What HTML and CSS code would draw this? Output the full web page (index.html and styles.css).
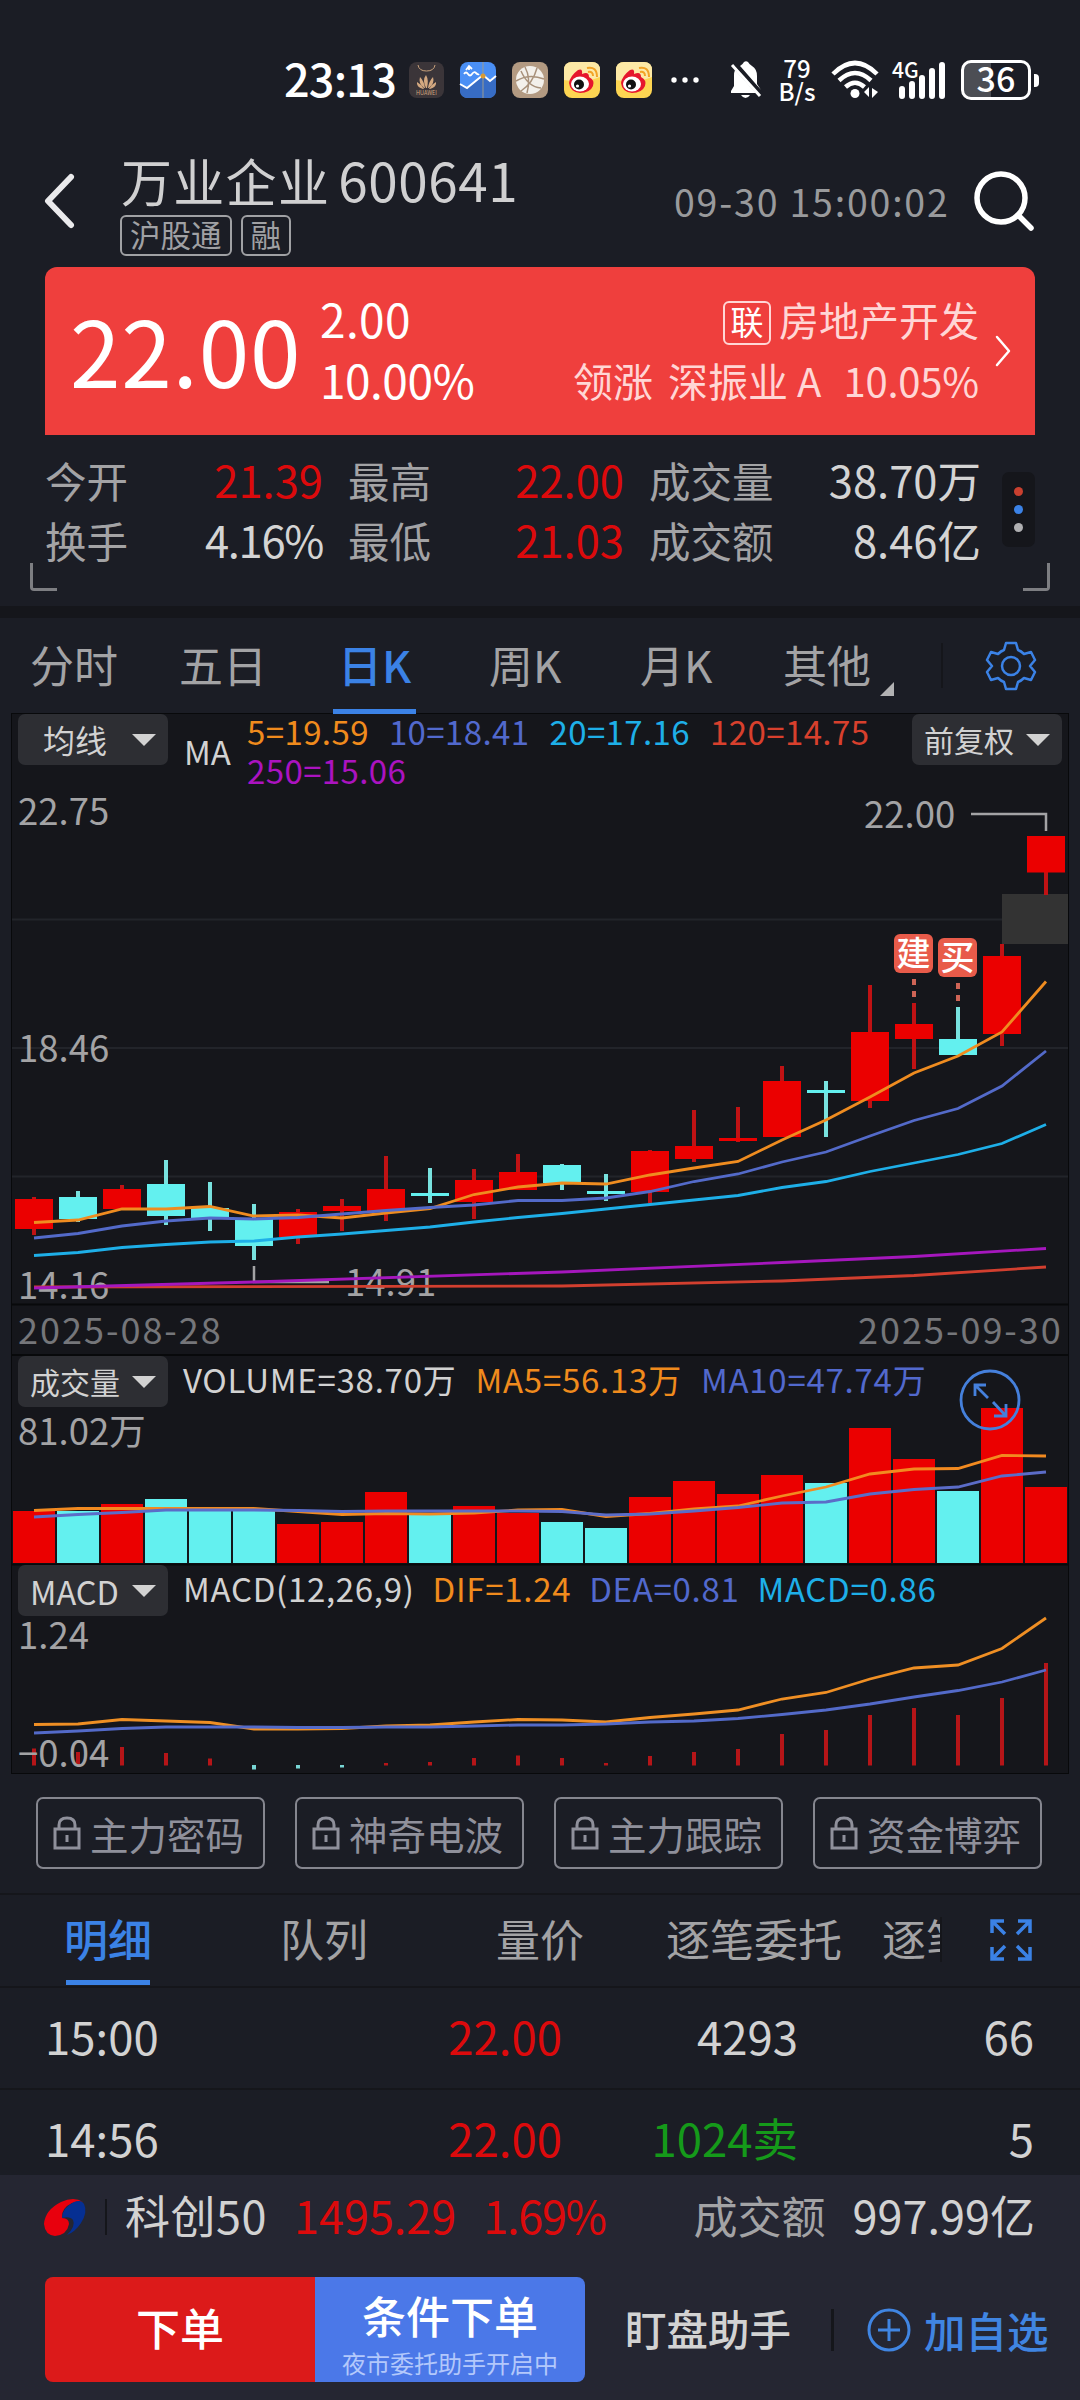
FILE: index.html
```html
<!DOCTYPE html>
<html lang="zh-CN">
<head>
  <meta charset="UTF-8" />
  <meta name="viewport" content="width=device-width, initial-scale=1.0"/>
  <title>万业企业 600641</title>
  <link rel="stylesheet" href="styles.css">
</head>
<body>

  <!-- Status bar -->
  <div class="status">
    <span class="clock">23:13</span>
    <div class="apps">
      <svg width="35" height="36" viewBox="0 0 35 36">
        <rect width="35" height="36" rx="8" fill="#3b3539"/>
        <path d="M9 3Q10 9 17.500 9T26 3" fill="none" stroke="#c9a27c" stroke-width="1"/>
        <path d="M17 26Q13 18 17 13Q20 18 18 26ZM15 26Q9 21 11 15Q15 19 16 26ZM20 26Q26 21 24 15Q20 19 19 26ZM14 27Q7 25 8 20Q12 22 15 27ZM21 27Q28 25 27 20Q23 22 20 27Z" fill="#d3a880"/>
        <text x="17.500" y="33" class="tiny-brand">HUAWEI</text>
      </svg>
      <svg width="36" height="36" viewBox="0 0 36 36">
        <rect width="36" height="36" rx="8" fill="#4a8ff5"/>
        <path d="M0 22L7 26L23 13L30 19L36 14V28Q36 36 28 36H8Q0 36 0 28Z" fill="#376cc4"/>
        <path d="M0 22L7 26L23 13L30 19L36 14" fill="none" stroke="#fff" stroke-width="2"/>
        <path d="M23 0V36" stroke="#9a9a90" stroke-width="1"/>
        <path d="M4 12Q6 9 8 12T12 12T16 11T19 12M6 8L9 4L12 7M9 4V8" fill="none" stroke="#fff" stroke-width="1.800"/>
        <circle cx="23" cy="14" r="2.500" fill="#d99b35"/>
      </svg>
      <svg width="36" height="36" viewBox="0 0 36 36">
        <rect width="36" height="36" rx="8" fill="#b39a82"/>
        <circle cx="18" cy="18" r="14" fill="#f3f0eb"/>
        <path d="M13 5Q19 16 15 31M4 19Q17 11 32 17M25 6Q21 21 9 29M9 9Q16 25 29 26" fill="none" stroke="#a8917b" stroke-width="1.500"/>
      </svg>
      <svg width="36" height="36" viewBox="0 0 36 36">
        <rect width="36" height="36" rx="8" fill="#fdd552"/>
        <path d="M0 8Q0 0 8 0H28Q36 0 36 8V15Q18 22 0 18Z" fill="#fde9a6"/>
        <path d="M5 21Q6 14 14 8Q19 6 18 12Q25 9 25 15Q31 18 29 24Q26 31 16 31Q6 30 5 21Z" fill="#e6162d"/>
        <ellipse cx="16" cy="22" rx="9" ry="7.500" fill="#fff"/>
        <circle cx="15" cy="22.500" r="5" fill="#111"/>
        <circle cx="13.500" cy="24" r="1.600" fill="#fff"/>
        <path d="M23 6Q33 4 33 15M24 10Q29 9 29 14" fill="none" stroke="#f2a325" stroke-width="2"/>
      </svg>
      <svg width="36" height="36" viewBox="0 0 36 36">
        <rect width="36" height="36" rx="8" fill="#fdd552"/>
        <path d="M0 8Q0 0 8 0H28Q36 0 36 8V15Q18 22 0 18Z" fill="#fde9a6"/>
        <path d="M5 21Q6 14 14 8Q19 6 18 12Q25 9 25 15Q31 18 29 24Q26 31 16 31Q6 30 5 21Z" fill="#e6162d"/>
        <ellipse cx="16" cy="22" rx="9" ry="7.500" fill="#fff"/>
        <circle cx="15" cy="22.500" r="5" fill="#111"/>
        <circle cx="13.500" cy="24" r="1.600" fill="#fff"/>
        <path d="M23 6Q33 4 33 15M24 10Q29 9 29 14" fill="none" stroke="#f2a325" stroke-width="2"/>
      </svg>
    </div>
    <svg class="more" width="28" height="8" viewBox="0 0 28 8" fill="#fff">
      <circle cx="3" cy="4" r="2.700"/><circle cx="14" cy="4" r="2.700"/><circle cx="25" cy="4" r="2.700"/>
    </svg>
    <svg class="bell" width="34" height="38" viewBox="0 0 34 38" fill="#fff">
      <path d="M11 5Q14 3 15 1Q17 -.5 19 1Q20 3 23 5Q28 8 28 15V23L32 29L12 6Z"/>
      <path d="M6 9L27 32H2V30L5 25V15Q5 11 6 9Z"/>
      <path d="M3 4L31 35" stroke="#fff" stroke-width="3"/>
      <path d="M7 4L33 32" stroke="#1b1d25" stroke-width="2"/>
      <path d="M12 34H21Q19 37 16.500 37T12 34Z"/>
    </svg>
    <div class="speed"><span>79</span><span>B/s</span></div>
    <svg class="wifi" width="48" height="38" viewBox="0 0 48 38">
      <path d="M2 13Q24 -9 46 13" fill="none" stroke="#fff" stroke-width="4.500"/>
      <path d="M8 19.500Q24 4.500 40 19.500" fill="none" stroke="#fff" stroke-width="4.500"/>
      <path d="M14.500 26Q24 17.500 33.500 26" fill="none" stroke="#fff" stroke-width="4.500"/>
      <circle cx="24" cy="32.500" r="4.500" fill="#fff"/>
      <path d="M38 26V36L33 31ZM41 27L47 31L41 37Z" fill="#fff"/>
    </svg>
    <svg class="signal" width="56" height="38" viewBox="0 0 56 38">
      <text x="0" y="17" class="net">4G</text>
      <path d="M10 28V35M20 23V35M30 17V35M40 10V35M50 4V35" stroke="#fff" stroke-width="6" stroke-linecap="round"/>
    </svg>
    <div class="battery"><span>36</span></div>
    <i class="battery-tip"></i>
  </div>

  <!-- Title -->
  <header>
    <svg class="back" width="32" height="56" viewBox="0 0 32 56">
      <path d="M27 4L4 28L27 52" fill="none" stroke="#eaeaec" stroke-width="6" stroke-linecap="round" stroke-linejoin="round"/>
    </svg>
    <div class="name">
      <h1>万业企业<span>600641</span></h1>
      <div class="tags"><span>沪股通</span><span>融</span></div>
    </div>
    <span class="time">09-30 15:00:02</span>
    <svg class="search" width="62" height="64" viewBox="0 0 62 64">
      <circle cx="28" cy="29" r="24" fill="none" stroke="#fff" stroke-width="5.500"/>
      <path d="M45 46L58 59" stroke="#fff" stroke-width="5.500" stroke-linecap="round"/>
    </svg>
  </header>

  <!-- Price banner -->
  <section class="banner">
    <strong>22.00</strong>
    <div class="change"><span>2.00</span><span class="pct">10.00%</span></div>
    <div class="sector">
      <div><b>联</b>房地产开发</div>
      <div class="leader"><span>领涨</span><span>深振业<em>A</em></span><span>10.05%</span></div>
    </div>
    <svg width="18" height="34" viewBox="0 0 18 34">
      <path d="M3 3L15 17L3 31" fill="none" stroke="#fff" stroke-width="2.500" stroke-linecap="round" stroke-linejoin="round"/>
    </svg>
  </section>

  <section class="quote">
    <div class="stats">
      <p><span>今开</span><b class="up">21.39</b></p>
      <p><span>最高</span><b class="up">22.00</b></p>
      <p><span>成交量</span><b>38.70万</b></p>
      <p><span>换手</span><b class="pct">4.16%</b></p>
      <p><span>最低</span><b class="up">21.03</b></p>
      <p><span>成交额</span><b>8.46亿</b></p>
    </div>
    <div class="dots"><i class="red"></i><i class="blue"></i><i class="gray"></i></div>
    <i class="corner left"></i>
    <i class="corner right"></i>
  </section>

  <!-- Period tabs -->
  <nav class="periods">
    <a>分时</a>
    <a>五日</a>
    <a class="active">日K</a>
    <a>周K</a>
    <a>月K</a>
    <a class="other">其他</a>
    <i class="split"></i>
    <svg width="50" height="50" viewBox="0 0 50 50" fill="none" stroke="#3b82e6" stroke-width="2.500" stroke-linejoin="round">
      <path d="M20 2H30L32 9Q35 10 38 13L45 11L49 19L44 25L49 31L45 39L38 37Q35 40 32 41L30 48H20L18 41Q15 40 12 37L5 39L1 31L6 25L1 19L5 11L12 13Q15 10 18 9Z"/>
      <circle cx="25" cy="25" r="9"/>
    </svg>
  </nav>

  <!-- Charts -->
  <section class="charts">
    <div class="legend main">
      <button class="wide">均线<i></i></button>
      <span class="ma">MA</span>
      <p><span class="c5">5=19.59</span><span class="c10">10=18.41</span><span class="c20">20=17.16</span><span class="c120">120=14.75</span><span class="c250">250=15.06</span></p>
      <button>前复权<i></i></button>
    </div>
    <svg id="price" width="1056" height="566" viewBox="12 790 1056 566"></svg>

    <div class="legend volume">
      <button>成交量<i></i></button>
      <span>VOLUME=38.70万</span><span class="c5">MA5=56.13万</span><span class="c10">MA10=47.74万</span>
      <svg class="expand" width="62" height="62" viewBox="0 0 62 62" fill="none" stroke="#4580dc" stroke-width="2.800">
        <circle cx="31" cy="31" r="29"/>
        <path d="M16 27V16H27M16 16L29 29M34 33L46 46M35 47H47V35"/>
      </svg>
    </div>
    <svg id="volume" width="1056" height="158" viewBox="12 1407 1056 158"></svg>

    <div class="legend macd">
      <button>MACD<i></i></button>
      <span>MACD(12,26,9)</span><span class="c5">DIF=1.24</span><span class="c10">DEA=0.81</span><span class="c20">MACD=0.86</span>
    </div>
    <svg id="macd" width="1056" height="157" viewBox="12 1616 1056 157"></svg>
  </section>

  <div class="locks">
    <a><svg width="28" height="34" viewBox="0 0 28 34"><path d="M6 13V9Q6 2 14 2T22 9V13M2 13H26V32H2ZM14 19V26"/></svg>主力密码</a>
    <a><svg width="28" height="34" viewBox="0 0 28 34"><path d="M6 13V9Q6 2 14 2T22 9V13M2 13H26V32H2ZM14 19V26"/></svg>神奇电波</a>
    <a><svg width="28" height="34" viewBox="0 0 28 34"><path d="M6 13V9Q6 2 14 2T22 9V13M2 13H26V32H2ZM14 19V26"/></svg>主力跟踪</a>
    <a><svg width="28" height="34" viewBox="0 0 28 34"><path d="M6 13V9Q6 2 14 2T22 9V13M2 13H26V32H2ZM14 19V26"/></svg>资金博弈</a>
  </div>

  <!-- Trade details -->
  <nav class="detail-tabs">
    <a class="active">明细</a>
    <a>队列</a>
    <a>量价</a>
    <a>逐笔委托</a>
    <a class="cut">逐笔</a>
    <i class="split"></i>
    <svg width="44" height="44" viewBox="0 0 44 44" fill="none" stroke="#3b82e6" stroke-width="3.500">
      <path d="M3 15V3H15M3 3L16 16M29 3H41V15M41 3L28 16M3 29V41H15M3 41L16 28M29 41H41V29M41 41L28 28"/>
    </svg>
  </nav>
  <div class="trade"><span>15:00</span><span class="up">22.00</span><span>4293</span><span>66</span></div>
  <div class="trade"><span>14:56</span><span class="up">22.00</span><span class="down">1024卖</span><span>5</span></div>

  <!-- Bottom bar -->
  <footer>
    <div class="index">
      <svg width="42" height="38" viewBox="0 0 42 38">
        <path d="M39 4Q30 -2 17 4Q1 12 0 26Q1 37 11 38Q23 37 25 26Q25 20 18 20Q17 10 28 5Q35 2 39 4Z" fill="#e8000d"/>
        <path d="M30 4Q37 1 40 6Q44 14 37 25Q31 34 23 37Q32 28 29 22Q26 18 18 20Q18 10 30 4Z" fill="#062f92"/>
      </svg>
      <i class="split"></i>
      <span class="label">科创50</span>
      <span class="up">1495.29</span>
      <span class="up pct">1.69%</span>
      <span class="amount">成交额</span>
      <span>997.99亿</span>
    </div>
    <div class="actions">
      <button class="order">下单</button>
      <button class="cond">条件下单<small>夜市委托助手开启中</small></button>
      <a class="helper">盯盘助手</a>
      <i class="split"></i>
      <a class="add">
        <svg width="44" height="44" viewBox="0 0 44 44" fill="none" stroke="#4085e2" stroke-width="3">
          <circle cx="22" cy="22" r="20"/><path d="M11 22H33M22 11V33"/>
        </svg>加自选</a>
    </div>
  </footer>

  <script src="script.js"></script>
</body>
</html>
```

FILE: styles.css
```css
body {
  width: 1080px;
  height: 2400px;
  margin: 0;
  overflow: hidden;
  background: #1b1d25;
  color: #d2d2d2;
  font-family: "Noto Sans CJK SC", sans-serif;
  line-height: 1;
  white-space: nowrap;
}

h1, p {
  margin: 0;
  font-weight: normal;
}

b, em, i {
  font-weight: normal;
  font-style: normal;
}

svg {
  display: block;
  flex: none;
  overflow: visible;
}

span, a, button, i {
  flex: none;
}

button {
  border: none;
  padding: 0;
  font-family: inherit;
  color: inherit;
}

.up {
  color: #dc0a0c;
}

.down {
  color: #159a1a;
}

.pct {
  letter-spacing: -1.3px;
}

.split {
  width: 2px;
  background: #15161b;
}

/* Status bar */
.status {
  display: flex;
  align-items: center;
  height: 140px;
  padding: 20px 0 0 284px;
  box-sizing: border-box;
  color: #fff;
}

.clock {
  width: 125px;
  font-size: 45px;
  font-weight: 500;
  letter-spacing: -0.8px;
  line-height: 50px;
  margin-top: -5px;
}

.apps {
  display: flex;
  gap: 16px;
}

.tiny-brand {
  font-size: 5.5px;
  fill: #d3a880;
  text-anchor: middle;
}

.more {
  margin-left: 19px;
}

.bell {
  margin-left: 30px;
}

.speed {
  display: flex;
  flex-direction: column;
  align-items: center;
  width: 40px;
  margin-left: 14px;
  font-size: 24px;
  line-height: 23px;
  font-weight: 500;
  margin-top: -3px;
}

.wifi {
  margin-left: 14px;
}

.signal {
  margin-left: 13px;
}

.net {
  font-size: 21px;
  font-weight: 500;
  fill: #fff;
}

.battery {
  width: 64px;
  height: 34px;
  margin-left: 13px;
  border: 3px solid #fff;
  border-radius: 10px;
  background: linear-gradient(to right, #4c4e54 27px, #1b1d25 27px);
  font-size: 34px;
  font-weight: 500;
  line-height: 30px;
  text-align: center;
}

.battery-tip {
  width: 5px;
  height: 13px;
  margin-left: 3px;
  border-radius: 0 4px 4px 0;
  background: #fff;
}

/* Title */
header {
  display: flex;
  height: 127px;
}

.back {
  margin: 33px 0 0 44px;
}

.name {
  width: 554px;
  margin-left: 44px;
}

.name h1 {
  height: 75px;
  padding-left: 1px;
  font-size: 51px;
  line-height: 78px;
  letter-spacing: 1.3px;
  margin-right: -10px;
  color: #d0d0d1;
}

.name h1 span {
  margin-left: 8px;
  font-size: 53px;
  letter-spacing: 0.6px;
}

.tags {
  display: flex;
  gap: 9px;
}

.tags span {
  height: 37px;
  padding: 0 8px;
  border: 2px solid #a0a1a4;
  border-radius: 6px;
  font-size: 30.5px;
  line-height: 34px;
  color: #a0a1a4;
}

.time {
  width: 299px;
  font-size: 37.5px;
  line-height: 121px;
  letter-spacing: 1.8px;
  color: #999a9c;
}

.search {
  margin-top: 29px;
}

/* Price banner */
.banner {
  display: flex;
  align-items: center;
  width: 990px;
  height: 168px;
  margin-left: 45px;
  border-radius: 12px 12px 0 0;
  background: #ef3f3d;
  color: #fff;
}

.banner strong {
  width: 250px;
  margin-left: 25px;
  font-size: 91px;
  font-weight: 400;
  letter-spacing: 0.8px;
  line-height: 158px;
  margin-top: -7px;
}

.change {
  display: flex;
  flex-direction: column;
  width: 180px;
  font-size: 46px;
  line-height: 61px;
  letter-spacing: 0.4px;
  margin-top: -4px;
}

.change .pct {
  letter-spacing: -0.5px;
}

.sector {
  width: 479px;
  margin-top: -2px;
  font-size: 40px;
  line-height: 61px;
  text-align: right;
  color: #ffd6d5;
}

.sector b {
  display: inline-block;
  width: 44px;
  height: 40px;
  margin-right: 8px;
  border: 2px solid #ffd6d5;
  border-radius: 6px;
  font-size: 33px;
  line-height: 36px;
  text-align: center;
  vertical-align: 1px;
  color: #fff;
}

.leader span + span {
  margin-left: 15px;
}

.leader span:last-child {
  margin-left: 22px;
  letter-spacing: -0.2px;
}

.leader em {
  margin-left: 9px;
}

.banner svg {
  margin-left: 15px;
}

/* Quote figures */
.quote {
  position: relative;
  display: flex;
  height: 171px;
  padding-left: 45px;
  border-bottom: 12px solid #15161b;
}

.stats {
  display: grid;
  grid-template-columns: 278px 276px 332px;
  column-gap: 25px;
  grid-auto-rows: 60px;
  align-content: start;
  padding-top: 15px;
}

.stats p {
  display: flex;
  justify-content: space-between;
  font-size: 41.5px;
  line-height: 60px;
  color: #a3a3a5;
}

.stats b {
  font-size: 43.500px;
  color: #d4d4d4;
}

.stats b.up {
  color: #dc0a0c;
}

.dots {
  display: flex;
  flex-direction: column;
  justify-content: center;
  align-items: center;
  gap: 9px;
  width: 33px;
  height: 75px;
  margin: 37px 0 0 21px;
  border-radius: 7px;
  background: #15161b;
}

.dots i {
  width: 9px;
  height: 9px;
  border-radius: 50%;
}

.dots .red {
  background: #c9402f;
}

.dots .blue {
  background: #3b82e6;
}

.dots .gray {
  background: #b0b0b2;
}

.corner {
  position: absolute;
  bottom: 15px;
  width: 24px;
  height: 25px;
  border-bottom: 3px solid #7d7e82;
}

.corner.left {
  left: 30px;
  border-left: 3px solid #7d7e82;
  border-bottom-left-radius: 4px;
}

.corner.right {
  right: 30px;
  border-right: 3px solid #7d7e82;
  border-bottom-right-radius: 4px;
}

/* Period tabs */
.periods {
  display: grid;
  grid-template-columns: 149px 151px 151px 151px 144px 165px 46px 50px;
  height: 96px;
  padding-left: 30px;
  font-size: 44px;
  line-height: 92px;
  color: #a3a3a5;
}

.periods .active {
  width: 83px;
  height: 91px;
  margin-left: 3px;
  border-bottom: 5px solid #3b82e6;
  font-weight: 500;
  text-align: center;
  color: #3b82e6;
}

.periods a:nth-child(4) {
  margin-left: 8px;
}

.periods a:nth-child(5) {
  margin-left: 8px;
}

.periods .other {
  padding-left: 7px;
}

.other::after {
  content: "";
  display: inline-block;
  margin-left: 9px;
  border-left: 14px solid transparent;
  border-bottom: 14px solid #b2b2b3;
  vertical-align: -13px;
}

.periods .split {
  height: 45px;
  margin-top: 25px;
}

.periods svg {
  margin: 23px 0 0 -1px;
}

/* Charts */
.charts {
  width: 1056px;
  height: 1059px;
  margin-left: 12px;
  background: #15161b;
  box-shadow: 0 0 0 1px #08090b;
}

.legend {
  position: relative;
  display: flex;
  height: 51px;
  padding-left: 6px;
  font-size: 33px;
  line-height: 46px;
}

.legend button {
  display: flex;
  align-items: center;
  justify-content: space-between;
  width: 150px;
  height: 51px;
  padding: 0 12px;
  box-sizing: border-box;
  border-radius: 7px;
  background: #2d2e33;
  font-size: 30px;
  line-height: 45px;
  color: #d2d2d2;
}

.legend.macd button {
  font-size: 32.5px;
}

.legend button.wide {
  padding-left: 25px;
  font-size: 32px;
}

.legend button i {
  border: 12px solid transparent;
  border-top-color: #d2d2d2;
  border-bottom: none;
}

.legend.main {
  height: 76px;
}

.ma {
  width: 63px;
  margin-left: 16px;
  line-height: 75px;
}

.main p {
  display: flex;
  flex-wrap: wrap;
  column-gap: 20px;
  width: 665px;
  line-height: 39px;
  letter-spacing: 0.4px;
  margin-top: -2px;
}

.volume > span {
  margin-left: 19px;
  letter-spacing: 0.75px;
}

.volume button + span,
.macd button + span {
  margin-left: 15px;
}

.macd > span {
  margin-left: 18px;
  letter-spacing: 0.7px;
}

.c5 {
  color: #f08b1d;
}

.c10 {
  color: #5269cd;
}

.c20 {
  color: #1eafe8;
}

.c120 {
  color: #d8402d;
}

.c250 {
  color: #ab13c0;
}

.expand {
  position: absolute;
  left: 947px;
  top: 13px;
  z-index: 1;
}

.axis {
  font-size: 36.5px;
  fill: #a3a3a5;
}

.date {
  font-size: 36px;
  letter-spacing: 2px;
  fill: #75767a;
}

.mark {
  font-size: 34px;
  font-weight: 500;
  fill: #fff;
  text-anchor: middle;
}

/* Locked indicators */
.locks {
  display: flex;
  gap: 30px;
  padding: 24px 36px;
  border-bottom: 2px solid #15161b;
}

.locks a {
  display: flex;
  align-items: center;
  gap: 9px;
  width: 229px;
  height: 72px;
  padding-left: 15px;
  box-sizing: border-box;
  border: 2px solid #85868f;
  border-radius: 7px;
  font-size: 38.5px;
  line-height: 62px;
  color: #8f909b;
}

.locks svg {
  fill: none;
  stroke: #8f909b;
  stroke-width: 3;
}

/* Trade details */
.detail-tabs {
  display: flex;
  height: 91px;
  padding-left: 66px;
  border-bottom: 2px solid #15161b;
  font-size: 44px;
  line-height: 86px;
  color: #a3a3a5;
}

.detail-tabs a {
  margin-right: 128px;
}

.detail-tabs .active {
  width: 84px;
  height: 85px;
  margin-right: 130px;
  border-bottom: 5px solid #3b82e6;
  font-weight: 500;
  text-indent: -2px;
  color: #3b82e6;
}

.detail-tabs a:nth-child(3) {
  margin-right: 82px;
}

.detail-tabs a:nth-child(4) {
  margin-right: 40px;
}

.detail-tabs .cut {
  width: 58px;
  margin-right: 0;
  overflow: hidden;
}

.detail-tabs .split {
  height: 45px;
  margin: 22px 47px 0 0;
}

.detail-tabs svg {
  margin-top: 23px;
}

.trade {
  display: grid;
  grid-template-columns: 200px 317px 236px 236px;
  height: 100px;
  padding-left: 45px;
  border-bottom: 2px solid #15161b;
  font-size: 45.5px;
  line-height: 95px;
  text-align: right;
}

.trade span:first-child {
  text-align: left;
}

.trade:last-of-type {
  height: 85px;
  border: none;
}

/* Bottom bar */
footer {
  height: 225px;
  background: #252632;
}

.index {
  display: flex;
  align-items: center;
  height: 84px;
  padding-left: 44px;
  font-size: 45px;
  line-height: 78px;
}

.index .split {
  height: 36px;
  margin: 0 18px 0 19px;
}

.index span {
  margin-right: 27px;
  margin-top: -5px;
}

.index .label {
  letter-spacing: 0.5px;
}

.index .amount {
  margin-left: auto;
  font-size: 44px;
  color: #a3a3a5;
}

.index span:last-child {
  margin-right: 45px;
}

.actions {
  display: flex;
  align-items: center;
  height: 105px;
  margin-top: 18px;
  padding-left: 45px;
}

.actions button {
  width: 270px;
  height: 105px;
  font-size: 44px;
  font-weight: 500;
  color: #fff;
}

.order {
  border-radius: 8px 0 0 8px;
  padding-bottom: 5px;
  background: #dc1a1a;
}

.cond {
  border-radius: 0 8px 8px 0;
  background: #4b78e8;
}

.cond small {
  display: block;
  margin-top: 2px;
  font-size: 24px;
  font-weight: 400;
  line-height: 28px;
  color: #b3c8fb;
}

.helper {
  margin-left: 40px;
  margin-top: -4px;
  font-size: 41.5px;
  line-height: 60px;
  font-weight: 500;
}

.actions .split {
  width: 3px;
  height: 42px;
  margin: 0 33px 0 40px;
}

.add {
  display: flex;
  align-items: center;
  gap: 13px;
  font-size: 41.5px;
  line-height: 54px;
  font-weight: 500;
  color: #4085e2;
}
```

FILE: script.js
```js
const UP = "#eb0000";
const DOWN = "#63f0ef";
const X0 = 34;
const STEP = 44;

// top, bottom, high, low, up
const candles = [
  [1199, 1229, 1197, 1235, 1], [1197, 1219, 1191, 1222, 0], [1189, 1209, 1185, 1209, 1],
  [1184, 1216, 1160, 1225, 0], [1208, 1218, 1182, 1231, 0], [1219, 1246, 1204, 1260, 0],
  [1212, 1237, 1209, 1244, 1], [1206, 1211, 1199, 1231, 1], [1189, 1211, 1156, 1221, 1],
  [1193, 1196, 1168, 1203, 0], [1180, 1202, 1169, 1219, 1], [1172, 1190, 1154, 1190, 1],
  [1165, 1183, 1164, 1190, 0], [1191, 1194, 1174, 1201, 0], [1151, 1192, 1150, 1203, 1],
  [1146, 1159, 1110, 1162, 1], [1138, 1141, 1107, 1142, 1], [1081, 1137, 1066, 1137, 1],
  [1090, 1093, 1081, 1137, 0], [1032, 1101, 985, 1108, 1], [1024, 1039, 1003, 1069, 1],
  [1039, 1055, 1007, 1055, 0], [956, 1034, 944, 1046, 1], [836, 872.5, 836, 895, 1]
];
const ma5 = [1222.5, 1220, 1209, 1209, 1206.5, 1216, 1215, 1218, 1213, 1208.5, 1194.5, 1187, 1183, 1184, 1175, 1168, 1161.5, 1140, 1120, 1097, 1073, 1056, 1032, 981.5];
const ma10 = [1238, 1233.5, 1226, 1221, 1218, 1219, 1217.5, 1214, 1210.5, 1207.5, 1205, 1200.5, 1200.5, 1198, 1191.5, 1181.5, 1174, 1162, 1152, 1136, 1120.5, 1108.5, 1086, 1051];
const ma20 = [1255.5, 1252.5, 1247.5, 1244.5, 1242, 1241, 1237, 1234, 1230.5, 1227, 1222, 1217.5, 1213.5, 1209, 1204.5, 1200, 1195.5, 1187.5, 1181.5, 1171.5, 1163, 1154.5, 1143.5, 1124.5];

const volumes = [1511, 1511, 1504, 1499, 1511, 1510, 1524, 1522, 1492, 1513, 1506, 1513, 1522, 1528, 1497, 1481, 1494, 1475, 1483, 1428, 1459, 1491, 1408, 1487];
const vol5 = [1510.5, 1508.5, 1508.5, 1508.5, 1508.5, 1508.5, 1511.5, 1514.5, 1513.5, 1514, 1513, 1510, 1509.5, 1516.5, 1513.5, 1509, 1506, 1496, 1487, 1474, 1469, 1468.5, 1455.5, 1456];
const vol10 = [1517, 1514.5, 1512.5, 1510, 1510, 1510, 1510.5, 1511.5, 1511, 1511, 1511, 1511, 1511.5, 1515, 1514, 1511, 1507.5, 1503, 1502, 1494, 1489.5, 1487, 1476, 1472];

const dif = [1724.5, 1724, 1719.5, 1721, 1722.5, 1729, 1729, 1728.5, 1726, 1725, 1722, 1719.5, 1720, 1722, 1717.5, 1714, 1710, 1699, 1692.5, 1679, 1668, 1665, 1648.5, 1618];
const dea = [1733, 1731, 1728.5, 1727, 1727, 1727, 1727.5, 1727.5, 1727, 1727, 1726, 1725, 1725, 1724, 1722, 1721, 1718.5, 1714.5, 1710, 1704, 1697, 1690.5, 1682, 1670];
const hist = [1748.5, 1752, 1747, 1753, 1758.5, 1770, 1769, 1768, 1763, 1762, 1758, 1755.5, 1758, 1763, 1756, 1752, 1749, 1734, 1730, 1715, 1708, 1715, 1698, 1663];

function rect(x, y, w, h, fill, extra = "") {
  return `<rect x="${x}" y="${y}" width="${w}" height="${h}" fill="${fill}" ${extra}/>`;
}

function line(values, color) {
  const points = values.map((y, i) => `${X0 + i * STEP},${y}`).join(" ");
  return `<polyline points="${points}" fill="none" stroke="${color}" stroke-width="2.8"/>`;
}

function path(d, color, width = 2.5, extra = "") {
  return `<path d="${d}" fill="none" stroke="${color}" stroke-width="${width}" ${extra}/>`;
}

function text(x, y, value, cls) {
  return `<text x="${x}" y="${y}" class="${cls}">${value}</text>`;
}

// Price chart
let out = "";
[919.5, 1048, 1176.5].forEach(y => out += path(`M12 ${y}H1068`, "#22242a", 2));
[1304.5, 1355].forEach(y => out += path(`M12 ${y}H1068`, "#08090b", 2));
out += text(18, 825, "22.75", "axis") + text(18, 1062, "18.46", "axis") + text(18, 1299, "14.16", "axis");
out += text(345, 1296, "14.91", "axis") + text(864, 828, "22.00", "axis");
out += rect(1002, 894, 66, 50, "#333");
candles.forEach(([top, bottom, high, low, up], i) => {
  const x = X0 + i * STEP;
  out += rect(x - 2, high, 4, low - high, up ? "#c01214" : "#78e2df");
  out += rect(x - 19, top, 38, bottom - top, up ? UP : DOWN);
});
out += path("M971 814H1046V831M254 1266V1282H329", "#a3a3a5");
out += line(ma20, "#1eafe8") + line(ma5, "#ef8c20") + line(ma10, "#536ac9");
out += path("M34 1287L562 1286L782 1281L914 1275.500L1046 1267", "#d23f2f", 2.8);
out += path("M34 1288L254 1282L562 1272L782 1262.500L914 1256.500L1046 1248.500", "#a517bd", 2.8);
[[914, 934, "建"], [958, 938, "买"]].forEach(([x, y, word]) => {
  out += rect(x - 20, y, 39, 39, "#e85b4a", 'rx="6"') + text(x - 0.5, y + 32, word, "mark");
  out += path(`M${x} ${y + 45}V${y + 64}`, "#cf6456", 4, 'stroke-dasharray="6 6"');
});
out += text(18, 1344, "2025-08-28", "date") + text(858, 1344, "2025-09-30", "date");
document.getElementById("price").innerHTML = out;

// Volume chart
out = text(18, 1445, "81.02万", "axis");
volumes.forEach((y, i) => {
  out += rect(X0 + i * STEP - 21, y, 42, 1563 - y, candles[i][4] ? UP : DOWN);
});
out += path("M12 1564.500H1068", "#08090b", 2) + line(vol5, "#f28a20") + line(vol10, "#5b6cc8");
document.getElementById("volume").innerHTML = out;

// MACD chart
out = "";
hist.forEach((y, i) => {
  const down = y > 1765;
  out += rect(X0 + i * STEP - 2, down ? 1765 : y, 4, Math.max(2, Math.abs(1765.5 - y)), down ? "#78d6d5" : "#b51518");
});
out += text(18, 1649, "1.24", "axis") + text(18, 1767, "−0.04", "axis");
out += line(dif, "#ef8f24") + line(dea, "#536ac9");
document.getElementById("macd").innerHTML = out;
```
